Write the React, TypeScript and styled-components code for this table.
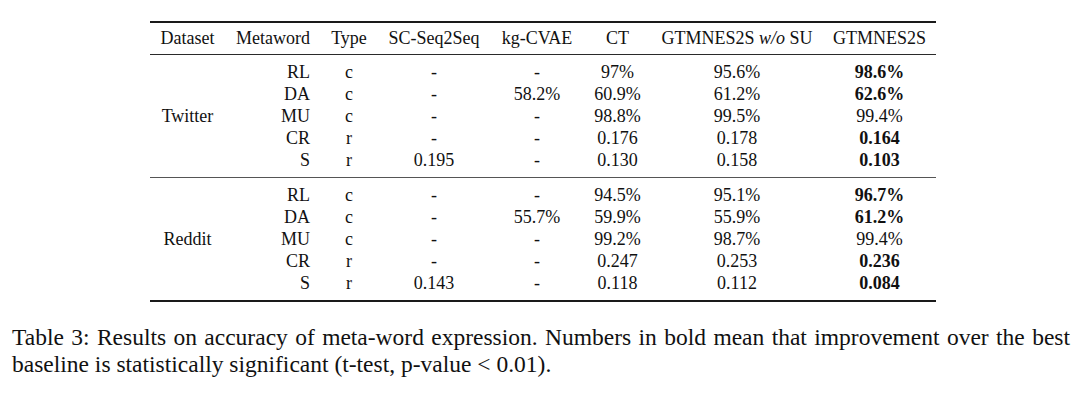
import React from "react";
import styled, { createGlobalStyle } from "styled-components";

const Global = createGlobalStyle`
  html, body {
    margin: 0;
    padding: 0;
    background: #ffffff;
  }
  body {
    font-family: "Liberation Serif", "Times New Roman", serif;
    color: #111111;
  }
`;

const Page = styled.div`
  width: 1080px;
  height: 402px;
  box-sizing: border-box;
  padding: 21px 10px 0 12px;
  display: flex;
  flex-direction: column;
  background: #ffffff;
`;

const Table = styled.table`
  border-collapse: collapse;
  table-layout: fixed;
  width: 786px;
  margin-left: 138px;
  font-family: "Liberation Serif", "Times New Roman", serif;
  font-size: 18px;
  line-height: 22px;
  color: #111111;
  border-top: 2px solid #1a1a1a;
  border-bottom: 2px solid #1a1a1a;
`;

const HeadRow = styled.tr`
  border-bottom: 1px solid #2a2a2a;
`;

const Group = styled.tbody<{ $first?: boolean }>`
  border-top: ${(p) => (p.$first ? "none" : "1px solid #555555")};
  tr:first-child td {
    padding-top: 6px;
  }
  tr:last-child td {
    padding-bottom: 6px;
  }
`;

type Align = "left" | "center" | "right";

const Th = styled.th<{ $align?: Align }>`
  font-weight: normal;
  padding: 4px 10px 5px;
  text-align: ${(p) => p.$align ?? "center"};
  white-space: nowrap;
`;

const Td = styled.td<{ $align?: Align; $bold?: boolean }>`
  padding: 0 10px;
  text-align: ${(p) => p.$align ?? "center"};
  font-weight: ${(p) => (p.$bold ? "bold" : "normal")};
  white-space: nowrap;
  vertical-align: middle;
`;

const DatasetCell = styled.td`
  padding: 6px 10px;
  text-align: center;
  vertical-align: middle;
  white-space: nowrap;
`;

const Caption = styled.p`
  margin: 22px 0 0;
  width: 1058px;
  font-family: "Liberation Serif", "Times New Roman", serif;
  font-size: 23.5px;
  line-height: 27px;
  text-align: justify;
  color: #111111;
`;

type Row = {
  metaword: string;
  type: string;
  sc: string;
  kg: string;
  ct: string;
  wosu: string;
  gtm: string;
  bold: boolean;
};

const groups: { name: string; rows: Row[] }[] = [
  {
    name: "Twitter",
    rows: [
      { metaword: "RL", type: "c", sc: "-", kg: "-", ct: "97%", wosu: "95.6%", gtm: "98.6%", bold: true },
      { metaword: "DA", type: "c", sc: "-", kg: "58.2%", ct: "60.9%", wosu: "61.2%", gtm: "62.6%", bold: true },
      { metaword: "MU", type: "c", sc: "-", kg: "-", ct: "98.8%", wosu: "99.5%", gtm: "99.4%", bold: false },
      { metaword: "CR", type: "r", sc: "-", kg: "-", ct: "0.176", wosu: "0.178", gtm: "0.164", bold: true },
      { metaword: "S", type: "r", sc: "0.195", kg: "-", ct: "0.130", wosu: "0.158", gtm: "0.103", bold: true },
    ],
  },
  {
    name: "Reddit",
    rows: [
      { metaword: "RL", type: "c", sc: "-", kg: "-", ct: "94.5%", wosu: "95.1%", gtm: "96.7%", bold: true },
      { metaword: "DA", type: "c", sc: "-", kg: "55.7%", ct: "59.9%", wosu: "55.9%", gtm: "61.2%", bold: true },
      { metaword: "MU", type: "c", sc: "-", kg: "-", ct: "99.2%", wosu: "98.7%", gtm: "99.4%", bold: false },
      { metaword: "CR", type: "r", sc: "-", kg: "-", ct: "0.247", wosu: "0.253", gtm: "0.236", bold: true },
      { metaword: "S", type: "r", sc: "0.143", kg: "-", ct: "0.118", wosu: "0.112", gtm: "0.084", bold: true },
    ],
  },
];

const widths = [75, 95, 58, 112, 94, 67, 172, 113];

export default function App() {
  return (
    <>
      <Global />
      <Page>
        <Table>
          <colgroup>
            {widths.map((w, i) => (
              <col key={i} style={{ width: w }} />
            ))}
          </colgroup>
          <thead>
            <HeadRow>
              <Th>Dataset</Th>
              <Th $align="right">Metaword</Th>
              <Th>Type</Th>
              <Th>SC-Seq2Seq</Th>
              <Th>kg-CVAE</Th>
              <Th>CT</Th>
              <Th>
                GTMNES2S <i>w/o</i> SU
              </Th>
              <Th>GTMNES2S</Th>
            </HeadRow>
          </thead>
          {groups.map((g, gi) => (
            <Group key={g.name} $first={gi === 0}>
              {g.rows.map((r, ri) => (
                <tr key={r.metaword}>
                  {ri === 0 && <DatasetCell rowSpan={g.rows.length}>{g.name}</DatasetCell>}
                  <Td $align="right">{r.metaword}</Td>
                  <Td>{r.type}</Td>
                  <Td>{r.sc}</Td>
                  <Td>{r.kg}</Td>
                  <Td>{r.ct}</Td>
                  <Td>{r.wosu}</Td>
                  <Td $bold={r.bold}>{r.gtm}</Td>
                </tr>
              ))}
            </Group>
          ))}
        </Table>
        <Caption>
          Table 3: Results on accuracy of meta-word expression. Numbers in bold mean that
          improvement over the best baseline is statistically significant (t-test, p-value
          &lt; 0.01).
        </Caption>
      </Page>
    </>
  );
}
